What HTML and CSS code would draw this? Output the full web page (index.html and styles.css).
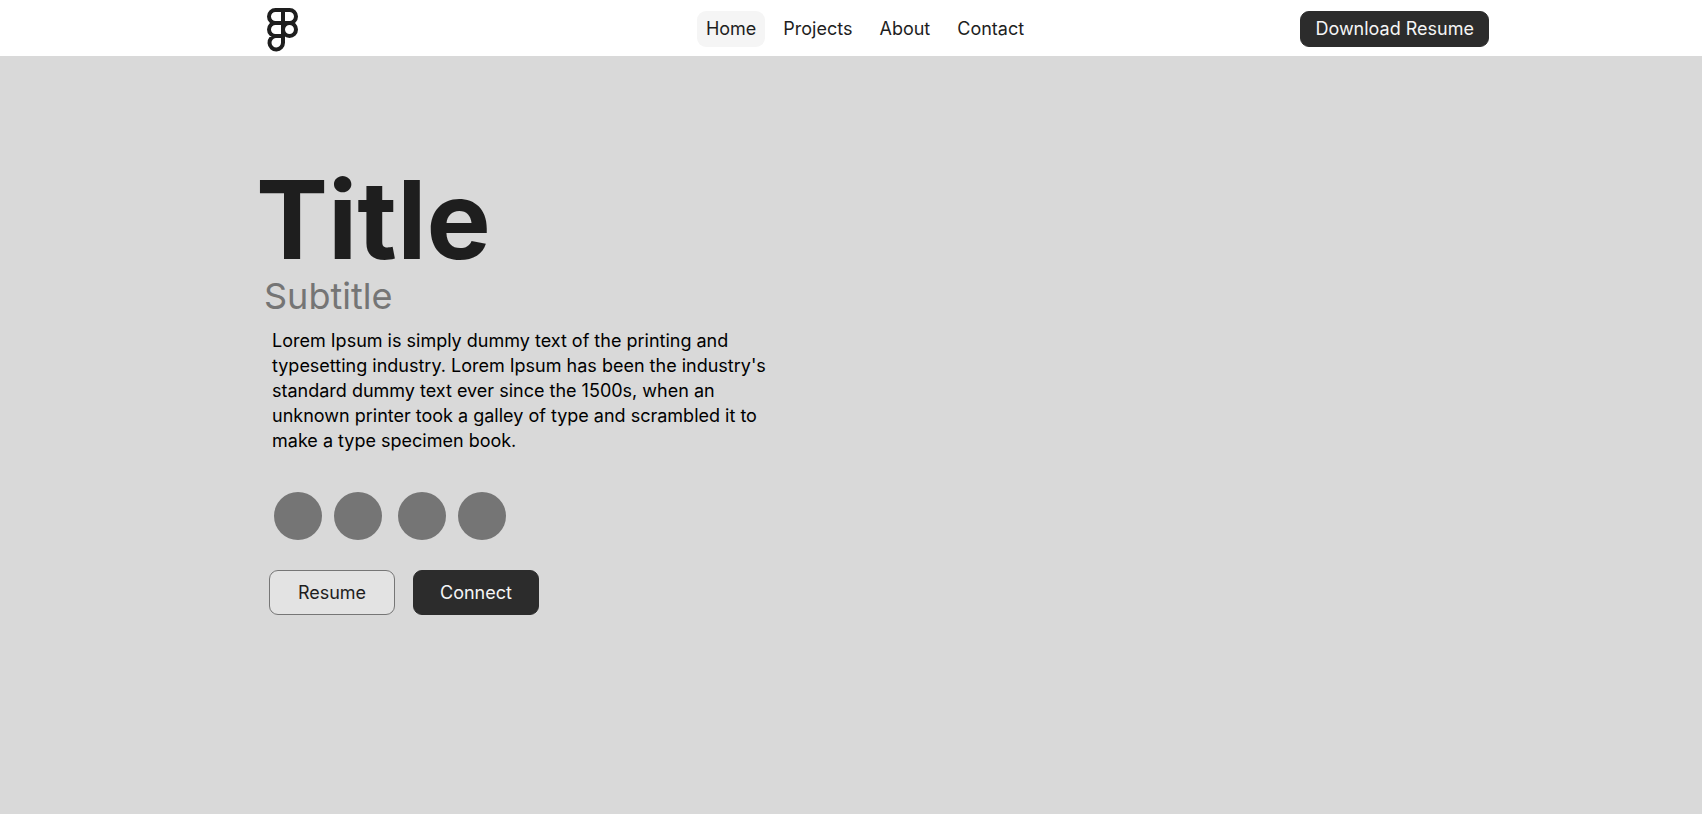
FILE: index.html
```html
<!DOCTYPE html>
<html lang="en">
<head>
<meta charset="utf-8">
<meta name="viewport" content="width=device-width, initial-scale=1">
<title>Portfolio</title>
<link rel="stylesheet" href="styles.css">
</head>
<body>
<header class="header">
  <a class="logo" href="#" aria-label="Home page">
    <svg class="logo-mark" viewBox="0 0 32 44" fill="none" stroke="currentColor" stroke-width="4" aria-hidden="true">
      <path d="M16 2H8.500a6.500 6.500 0 0 0 0 13H16zM16 2h6.500a6.500 6.500 0 0 1 0 13H16zM16 15H8.500a6.500 6.500 0 0 0 0 13H16zM16 28H8.500a6.750 6.750 0 1 0 7.500 6.750z"/>
      <circle cx="22.500" cy="21.500" r="6.500"/>
    </svg>
  </a>
  <nav class="nav" aria-label="Main">
    <a class="nav-link nav-link-active" href="#" aria-current="page">Home</a>
    <a class="nav-link" href="#projects">Projects</a>
    <a class="nav-link" href="#about">About</a>
    <a class="nav-link" href="#contact">Contact</a>
  </nav>
  <button class="button button-dark button-download" type="button">Download Resume</button>
</header>
<main class="hero">
  <h1 class="title">Title</h1>
  <p class="subtitle">Subtitle</p>
  <div class="details">
    <p class="intro">Lorem Ipsum is simply dummy text of the printing and typesetting industry. Lorem Ipsum has been the industry's standard dummy text ever since the 1500s, when an unknown printer took a galley of type and scrambled it to make a type specimen book.</p>
    <div class="socials">
      <div class="social-pair"><span class="social"></span><span class="social"></span></div>
      <div class="social-pair"><span class="social"></span><span class="social"></span></div>
    </div>
    <div class="actions">
      <button class="button button-light" type="button">Resume</button>
      <button class="button button-dark" type="button">Connect</button>
    </div>
  </div>
</main>
</body>
</html>
```
FILE: styles.css
```css
* {
  box-sizing: border-box;
}

body {
  margin: 0;
  min-height: 100vh;
  background: #d9d9d9;
  color: #1e1e1e;
  font-family: Inter, "Liberation Sans", sans-serif;
  font-size: 18px;
}

.header {
  display: grid;
  grid-template-columns: 1fr auto 1fr;
  align-items: center;
  padding: 8px 213px 4px 241px;
  background: #fff;
}

.logo {
  justify-self: start;
  margin-left: 26px;
  color: #1e1e1e;
}

.logo-mark {
  display: block;
  width: 32px;
  height: 44px;
}

.nav {
  display: flex;
  gap: 9px;
  margin-bottom: 3px;
}

.nav-link {
  padding: 9px;
  border-radius: 9px;
  color: #1e1e1e;
  line-height: 18px;
  text-decoration: none;
}

.nav-link-active {
  background: #f5f5f5;
}

.button {
  height: 45px;
  min-width: 126px;
  padding: 0 14px;
  border: 1px solid;
  border-radius: 9px;
  font: inherit;
  line-height: 18px;
  cursor: pointer;
}

.button-dark {
  border-color: #2c2c2c;
  background: #2c2c2c;
  color: #f5f5f5;
}

.button-light {
  border-color: #767676;
  background: #e3e3e3;
  color: #1e1e1e;
}

.button-download {
  justify-self: end;
  height: 36px;
  margin-bottom: 3px;
}

.hero {
  padding: 109px 256px 80px;
}

.title {
  margin: 0;
  font-size: 108px;
  line-height: 110px;
  font-weight: 700;
}

.subtitle {
  margin: 0 0 0 8px;
  color: #757575;
  font-size: 36px;
  line-height: 42px;
}

.details {
  margin: 11px 0 0 13px;
}

.intro {
  max-width: 504px;
  margin: 0 0 0 3px;
  color: #000;
  line-height: 25px;
}

.socials {
  display: flex;
  gap: 16px;
  margin: 39px 0 30px 5px;
}

.social-pair {
  display: flex;
  gap: 12px;
}

.social {
  width: 48px;
  height: 48px;
  border-radius: 50%;
  background: #757575;
}

.actions {
  display: flex;
  gap: 18px;
}
```
